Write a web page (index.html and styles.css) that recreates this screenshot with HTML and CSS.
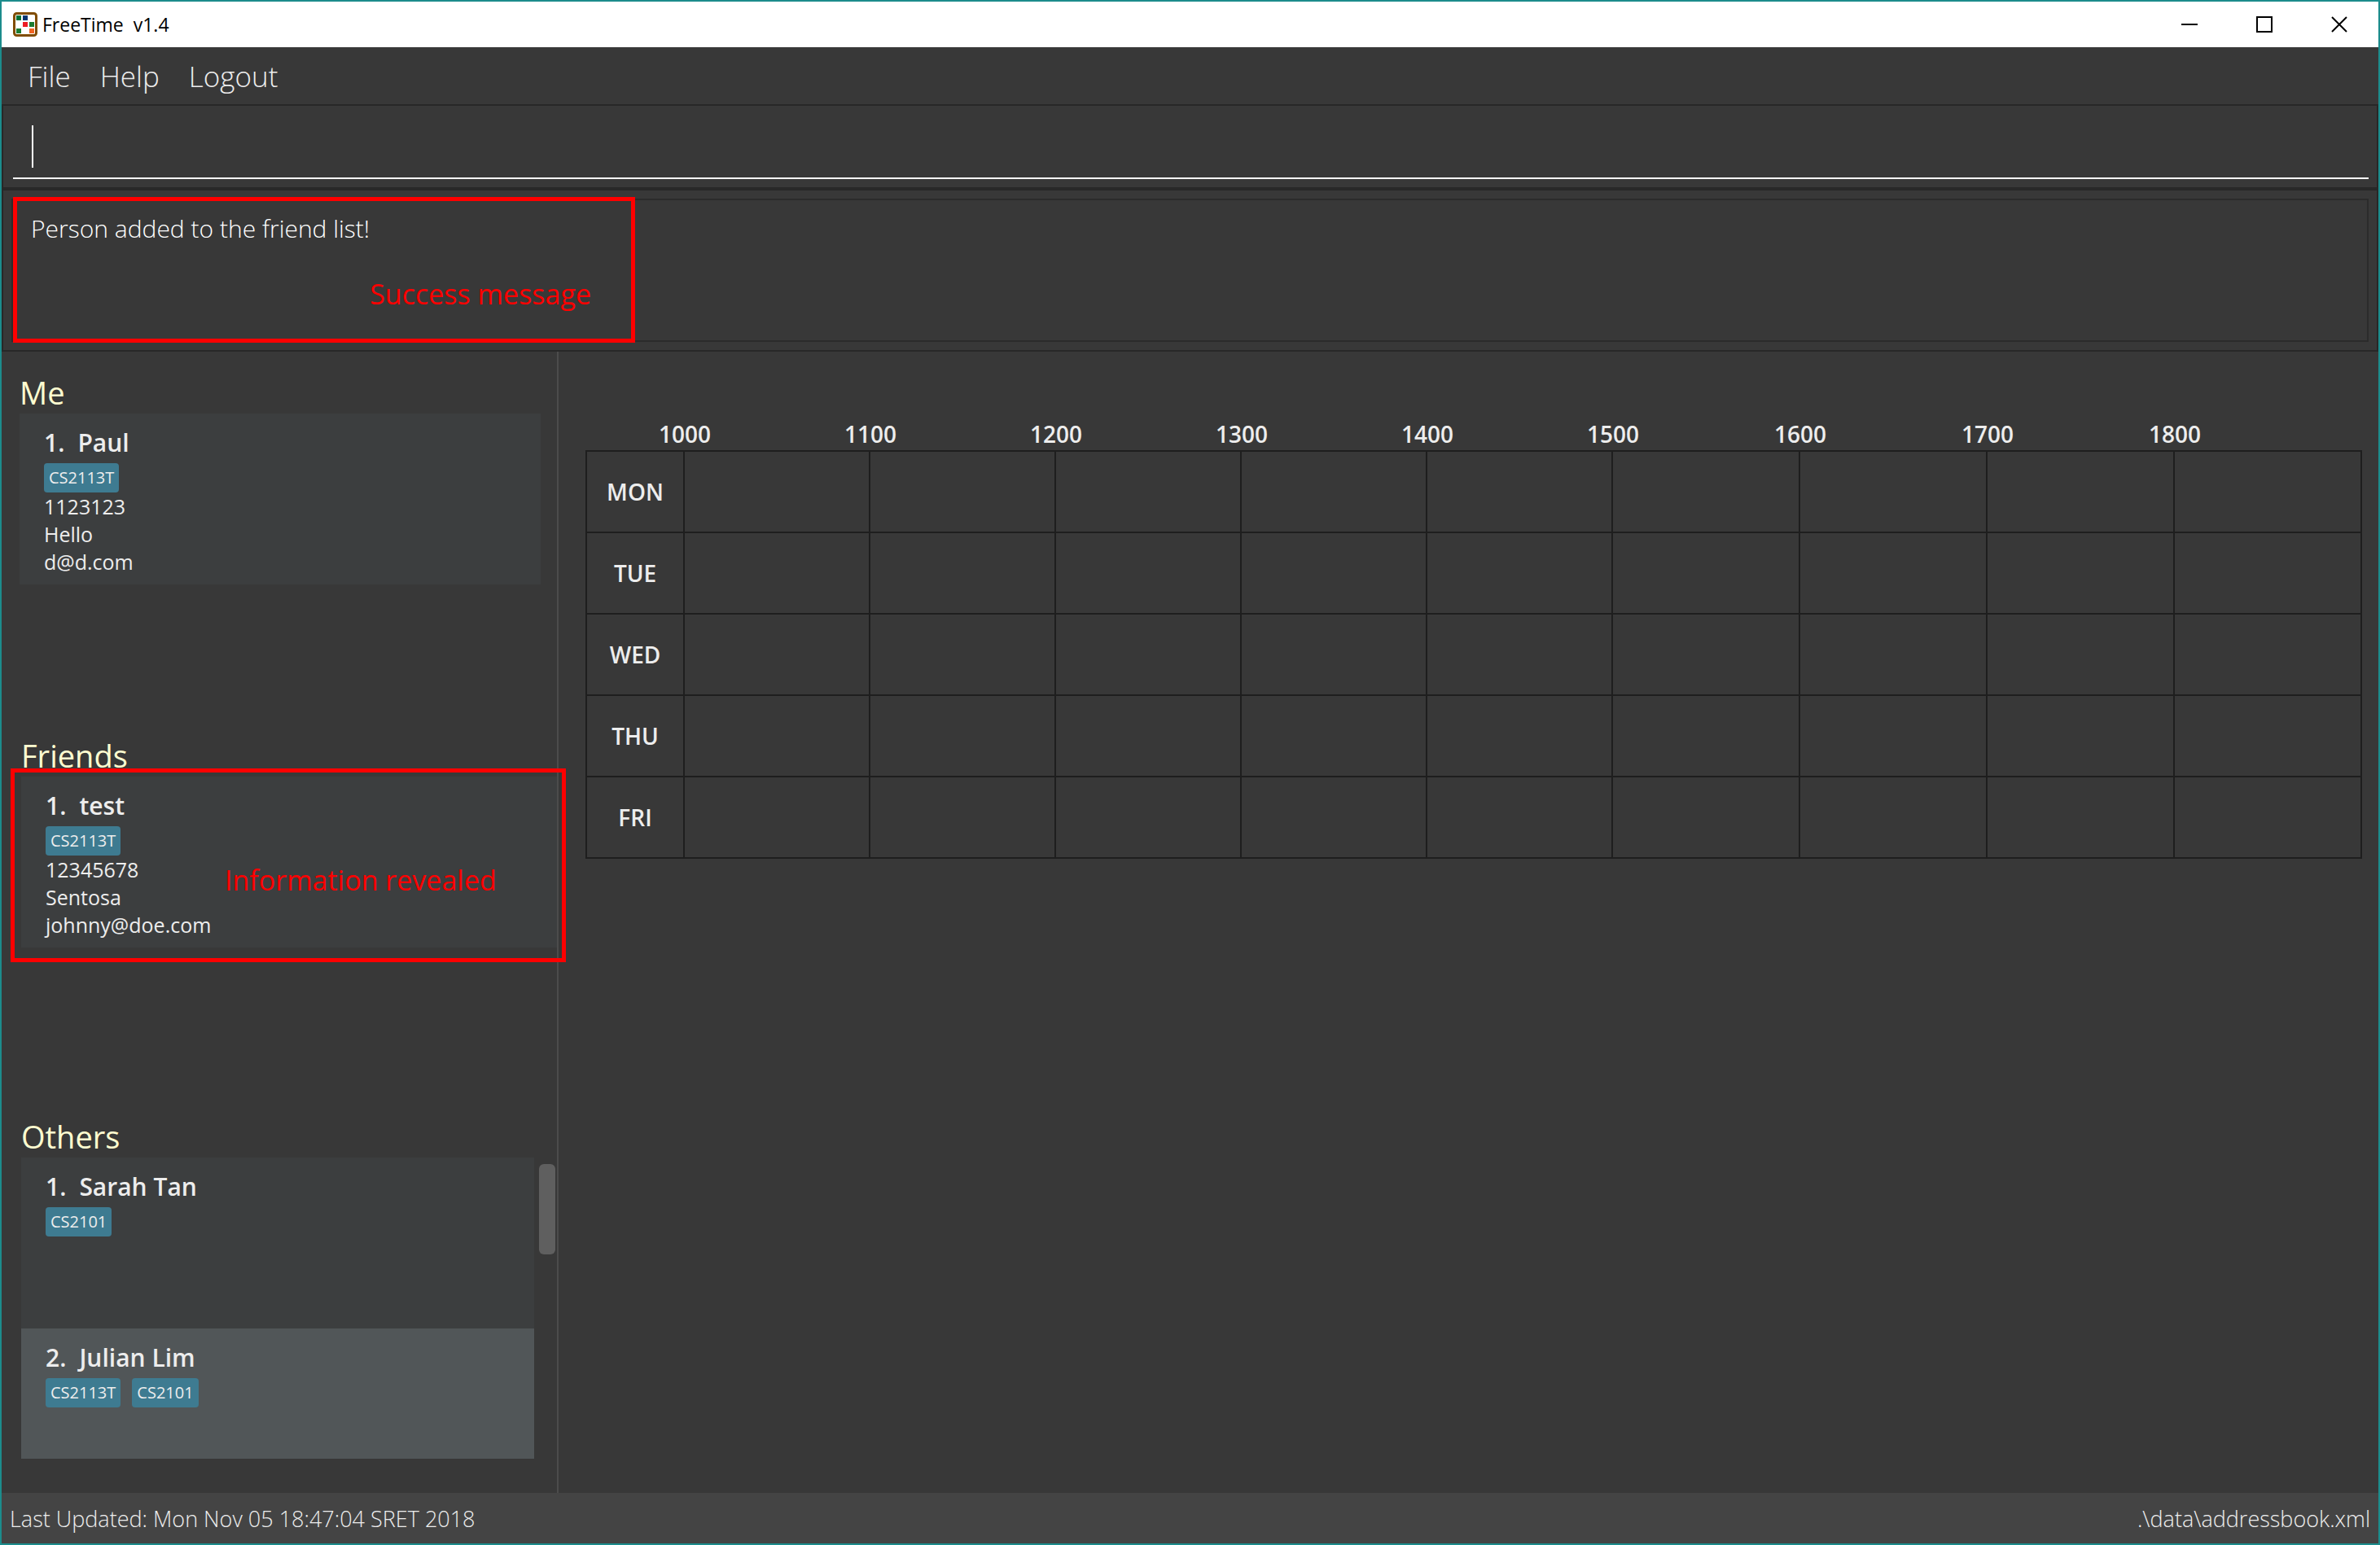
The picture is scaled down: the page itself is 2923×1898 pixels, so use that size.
FILE: index.html
```html
<!DOCTYPE html>
<html lang="en">
<head>
<meta charset="utf-8">
<title>FreeTime v1.4</title>
<link rel="stylesheet" href="styles.css">
</head>
<body>
<div class="window">
  <header class="titlebar">
    <svg class="app-icon" viewBox="0 0 30 30" aria-hidden="true">
      <rect x="1.5" y="1.5" width="27" height="27" rx="3" fill="#fff" stroke="#804c00" stroke-width="3"/>
      <path fill="#007236" d="M4 4h6v6H4z"/>
      <path fill="#003471" d="M12 4h6v6h-6z"/>
      <path fill="#ed1c24" d="M12 12h6v6h-6z"/>
      <path fill="#1a7b30" d="M20 12h6v6h-6zM4 20h6v6H4z"/>
      <path fill="#f26522" d="M20 20h6v6h-6z"/>
    </svg>
    <h1 class="app-title">FreeTime&nbsp; v1.4</h1>
    <div class="window-controls">
      <button class="window-button" type="button" aria-label="Minimize"><svg viewBox="0 0 20 20"><path d="M0 10h20"/></svg></button>
      <button class="window-button" type="button" aria-label="Maximize"><svg viewBox="0 0 20 20"><path d="M1 1h18v18H1z"/></svg></button>
      <button class="window-button" type="button" aria-label="Close"><svg viewBox="0 0 20 20"><path d="M1 1l18 18M19 1L1 19"/></svg></button>
    </div>
  </header>

  <nav class="menubar">
    <button class="menu" type="button">File</button>
    <button class="menu" type="button">Help</button>
    <button class="menu" type="button">Logout</button>
  </nav>

  <div class="command-pane">
    <div class="command-field">
      <span class="caret"></span>
      <input class="command-input" type="text" aria-label="Command">
    </div>
  </div>

  <div class="result-pane">
    <output class="result">Person added to the friend list!</output>
    <div class="note note-success"><span>Success message</span></div>
  </div>

  <main class="content">
    <aside class="sidebar">
      <section class="group group-me">
        <h2 class="group-title">Me</h2>
        <ul class="cards">
          <li class="card">
            <h3 class="name"><span>1.</span><span>Paul</span></h3>
            <div class="tags"><span class="tag">CS2113T</span></div>
            <p class="detail">1123123</p>
            <p class="detail">Hello</p>
            <p class="detail">d@d.com</p>
          </li>
        </ul>
      </section>
      <section class="group">
        <h2 class="group-title">Friends</h2>
        <ul class="cards">
          <li class="card">
            <h3 class="name"><span>1.</span><span>test</span></h3>
            <div class="tags"><span class="tag">CS2113T</span></div>
            <p class="detail">12345678</p>
            <p class="detail">Sentosa</p>
            <p class="detail">johnny@doe.com</p>
          </li>
        </ul>
        <div class="note note-info"><span>Information revealed</span></div>
      </section>
      <section class="group group-others">
        <h2 class="group-title">Others</h2>
        <div class="scroller">
          <ul class="cards">
            <li class="card">
              <h3 class="name"><span>1.</span><span>Sarah Tan</span></h3>
              <div class="tags"><span class="tag">CS2101</span></div>
            </li>
            <li class="card card-even">
              <h3 class="name"><span>2.</span><span>Julian Lim</span></h3>
              <div class="tags"><span class="tag">CS2113T</span><span class="tag">CS2101</span></div>
            </li>
          </ul>
          <div class="scrollbar"><div class="thumb"></div></div>
        </div>
      </section>
    </aside>

    <section class="schedule">
      <table class="timetable">
        <colgroup><col class="day-column"></colgroup>
        <colgroup class="morning-columns" span="5"></colgroup>
        <colgroup span="4"></colgroup>
        <thead>
          <tr>
            <td></td>
            <th scope="col"><span class="hour">1000</span></th>
            <th scope="col"><span class="hour">1100</span></th>
            <th scope="col"><span class="hour">1200</span></th>
            <th scope="col"><span class="hour">1300</span></th>
            <th scope="col"><span class="hour">1400</span></th>
            <th scope="col"><span class="hour">1500</span></th>
            <th scope="col"><span class="hour">1600</span></th>
            <th scope="col"><span class="hour">1700</span></th>
            <th scope="col"><span class="hour">1800</span></th>
          </tr>
        </thead>
        <tbody>
          <tr><th scope="row">MON</th><td></td><td></td><td></td><td></td><td></td><td></td><td></td><td></td><td></td></tr>
          <tr><th scope="row">TUE</th><td></td><td></td><td></td><td></td><td></td><td></td><td></td><td></td><td></td></tr>
          <tr><th scope="row">WED</th><td></td><td></td><td></td><td></td><td></td><td></td><td></td><td></td><td></td></tr>
          <tr><th scope="row">THU</th><td></td><td></td><td></td><td></td><td></td><td></td><td></td><td></td><td></td></tr>
          <tr><th scope="row">FRI</th><td></td><td></td><td></td><td></td><td></td><td></td><td></td><td></td><td></td></tr>
        </tbody>
      </table>
    </section>
  </main>

  <footer class="statusbar">
    <span>Last Updated: Mon Nov 05 18:47:04 SRET 2018</span>
    <span>.\data\addressbook.xml</span>
  </footer>
</div>
</body>
</html>
```
FILE: styles.css
```css
* {
  box-sizing: border-box;
}

body,
h1,
h2,
h3,
p,
ul {
  margin: 0;
  padding: 0;
}

body {
  background: #383838;
  color: #ededed;
  font-family: "Open Sans", "Noto Sans", sans-serif;
}

button,
input {
  border: 0;
  padding: 0;
  background: none;
  color: inherit;
  font: inherit;
}

.window {
  display: flex;
  flex-direction: column;
  min-height: 100vh;
  border: 2px solid #1c8c8c;
}

/* Title bar */
.titlebar {
  display: flex;
  align-items: center;
  height: 56px;
  padding: 0 2px 0 14px;
  background: #fff;
  color: #000;
}

.app-icon {
  width: 30px;
  height: 30px;
}

.app-title {
  margin-left: 6px;
  font-size: 23px;
  font-weight: 400;
}

.window-controls {
  display: flex;
  margin-left: auto;
}

.window-button {
  display: grid;
  place-items: center;
  width: 92px;
  height: 54px;
}

.window-button svg {
  width: 20px;
  height: 20px;
  fill: none;
  stroke: #000;
  stroke-width: 2;
}

/* Menu bar */
.menubar {
  display: flex;
  align-items: center;
  gap: 36px;
  height: 70px;
  padding-left: 32px;
}

.menu {
  font-size: 35px;
  font-weight: 300;
}

/* Command box */
.command-pane {
  height: 104px;
  padding: 0 10px 10px 12px;
  border: 2px solid #282828;
}

.command-field {
  display: flex;
  align-items: center;
  height: 90px;
  padding: 12px 23px 0;
  border-bottom: 2px solid #fff;
}

.caret {
  width: 2px;
  height: 52px;
  background: #fff;
}

.command-input {
  flex: 1;
  height: 52px;
  font-size: 30px;
  font-weight: 300;
  outline: 0;
}

/* Result display */
.result-pane {
  position: relative;
  height: 200px;
  padding: 10px;
  border: 2px solid #282828;
}

.result {
  display: block;
  height: 176px;
  padding: 13px 22px;
  border: 2px solid #2b2b2b;
  color: #fff;
  font-size: 30px;
  font-weight: 300;
  line-height: 44px;
}

/* Red call-outs over the window */
.note {
  position: absolute;
  display: flex;
  border: 5px solid #f00;
  color: #f00;
  font-size: 34px;
  line-height: 48px;
}

.note-success {
  top: 8px;
  left: 12px;
  width: 764px;
  height: 179px;
  padding: 90px 49px 0 0;
  justify-content: flex-end;
}

.note-info {
  top: 44px;
  left: -13px;
  width: 682px;
  height: 238px;
  padding: 108px 0 0 258px;
}

/* Main area */
.content {
  display: flex;
  flex: 1;
}

.sidebar {
  display: grid;
  grid-template-rows: 446fr 468fr 466fr;
  flex: none;
  width: 684px;
  padding: 22px 0 0 24px;
  border-right: 2px solid #4c4c4c;
}

.group {
  position: relative;
}

.group-me {
  margin-left: -2px;
  padding-right: 20px;
}

.group-title {
  padding-top: 2px;
  color: #fffdd0;
  font-size: 38px;
  font-weight: 400;
  line-height: 52px;
}

.cards {
  list-style: none;
}

.card {
  height: 210px;
  padding: 14px 30px 0;
  background: #3c3e3f;
}

.card-even {
  height: 160px;
  background: #515658;
}

.name {
  display: flex;
  gap: 16px;
  font-size: 30px;
  font-weight: 600;
  line-height: 44px;
}

.tags {
  display: flex;
  gap: 14px;
  margin-top: 3px;
}

.tag {
  height: 36px;
  padding: 0 6px;
  border-radius: 4px;
  background: #3e7b91;
  font-size: 20px;
  font-weight: 500;
  line-height: 36px;
}

.detail {
  font-size: 25px;
  line-height: 34px;
}

.scroller {
  display: flex;
  gap: 6px;
}

.scroller .cards {
  flex: 1;
}

.scrollbar {
  width: 22px;
  padding: 8px 2px 0 0;
}

.thumb {
  height: 111px;
  border-radius: 6px;
  background: #5f5f5f;
}

/* Timetable */
.schedule {
  flex: 1;
  padding: 76px 20px 0 33px;
}

.timetable {
  width: 100%;
  table-layout: fixed;
  border-collapse: collapse;
  font-size: 28px;
}

.timetable th {
  padding: 0;
  font-weight: 600;
}

.day-column {
  width: 120px;
}

.morning-columns {
  width: 228px;
}

.timetable thead tr {
  height: 46px;
}

.timetable thead th {
  padding-top: 4px;
}

.hour {
  display: flex;
  justify-content: center;
  width: 2px;
}

.timetable tbody tr {
  height: 100px;
}

.timetable tbody th,
.timetable tbody td {
  border: 2px solid #1e1e1e;
}

/* Status bar */
.statusbar {
  display: flex;
  align-items: center;
  justify-content: space-between;
  height: 62px;
  padding: 0 10px;
  background: #444;
  font-size: 27px;
  font-weight: 300;
}
```
